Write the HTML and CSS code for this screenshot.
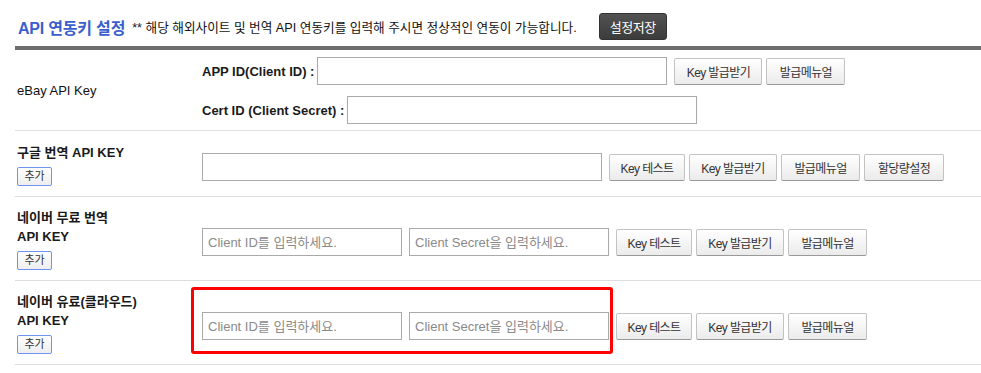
FILE: index.html
```html
<!DOCTYPE html>
<html lang="ko">
<head>
<meta charset="utf-8">
<title>API 연동키 설정</title>
<link rel="stylesheet" href="styles.css">
</head>
<body>
<div class="api-settings">
  <div class="head">
    <h2 class="head-title">API 연동키 설정</h2>
    <p class="head-note">** 해당 해외사이트 및 번역 API 연동키를 입력해 주시면 정상적인 연동이 가능합니다.</p>
    <button class="btn-save" type="button">설정저장</button>
  </div>

  <div class="key-table">
    <div class="key-row">
      <div class="key-label key-label--plain">eBay API Key</div>
      <div class="key-fields key-fields--stack">
        <div class="field-line">
          <span class="field-name">APP ID(Client ID) :</span>
          <input class="inp inp-350" type="text">
          <button class="btn btn-issue" type="button">Key 발급받기</button>
          <button class="btn btn-manual" type="button">발급메뉴얼</button>
        </div>
        <div class="field-line">
          <span class="field-name">Cert ID (Client Secret) :</span>
          <input class="inp inp-350" type="text">
        </div>
      </div>
    </div>

    <div class="key-row">
      <div class="key-label">
        구글 번역 API KEY
        <button class="btn-add" type="button">추가</button>
      </div>
      <div class="key-fields">
        <input class="inp inp-400" type="text">
        <button class="btn btn-test" type="button">Key 테스트</button>
        <button class="btn btn-issue" type="button">Key 발급받기</button>
        <button class="btn btn-manual" type="button">발급메뉴얼</button>
        <button class="btn btn-quota" type="button">할당량설정</button>
      </div>
    </div>

    <div class="key-row">
      <div class="key-label">
        네이버 무료 번역<br>API KEY
        <button class="btn-add" type="button">추가</button>
      </div>
      <div class="key-fields">
        <input class="inp inp-200" type="text" placeholder="Client ID를 입력하세요.">
        <input class="inp inp-200" type="text" placeholder="Client Secret을 입력하세요.">
        <button class="btn btn-test" type="button">Key 테스트</button>
        <button class="btn btn-issue" type="button">Key 발급받기</button>
        <button class="btn btn-manual" type="button">발급메뉴얼</button>
      </div>
    </div>

    <div class="key-row key-row--marked">
      <div class="key-label">
        네이버 유료(클라우드)<br>API KEY
        <button class="btn-add" type="button">추가</button>
      </div>
      <div class="key-fields">
        <input class="inp inp-200" type="text" placeholder="Client ID를 입력하세요.">
        <input class="inp inp-200" type="text" placeholder="Client Secret을 입력하세요.">
        <button class="btn btn-test" type="button">Key 테스트</button>
        <button class="btn btn-issue" type="button">Key 발급받기</button>
        <button class="btn btn-manual" type="button">발급메뉴얼</button>
      </div>
      <div class="mark-box"></div>
    </div>
  </div>
</div>
</body>
</html>
```

FILE: styles.css
```css
body {
  margin: 0;
  background: #fff;
  color: #222;
  font-family: "Liberation Sans", "Noto Sans CJK KR", sans-serif;
}

.api-settings {
  margin-left: 15px;
}

/* header */
.head {
  display: flex;
  align-items: center;
  height: 27px;
  padding: 13px 0 6px 3px;
}

.head-title {
  margin: 0;
  font-size: 16px;
  font-weight: bold;
  color: #3a5fcd;
  letter-spacing: -0.2px;
  white-space: nowrap;
}

.head-note {
  margin: 0 0 0 7px;
  font-size: 12.65px;
  color: #111;
  white-space: nowrap;
}

.btn-save {
  appearance: none;
  margin-left: 22px;
  box-sizing: border-box;
  width: 68px;
  height: 27px;
  padding: 0;
  border: 1px solid #333;
  border-radius: 3px;
  background: linear-gradient(#525252, #3c3c3c);
  color: #fff;
  font-family: "Liberation Sans", "Noto Sans CJK KR", sans-serif;
  font-size: 13px;
  letter-spacing: -0.5px;
}

/* table */
.key-table {
  border-top: 4px solid #6e6e6e;
}

.key-row {
  position: relative;
  display: grid;
  grid-template-columns: 187px 1fr;
  align-items: center;
  box-sizing: border-box;
  min-height: 66px;
  border-bottom: 1px solid #ddd;
}

.key-label {
  padding: 11px 0 10px 2px;
  font-size: 13px;
  font-weight: bold;
  line-height: 19px;
  color: #1a1a1a;
}

.key-label--plain {
  font-weight: normal;
  color: #111;
}

.btn-add {
  appearance: none;
  display: block;
  box-sizing: border-box;
  width: 35px;
  height: 19px;
  margin-top: 5px;
  padding: 0;
  border: 1px solid #6f93f0;
  border-radius: 2px;
  background: linear-gradient(#ffffff, #eeeeee);
  color: #333;
  font-family: "Liberation Sans", "Noto Sans CJK KR", sans-serif;
  font-size: 11px;
  font-weight: normal;
  line-height: 17px;
}

.key-fields {
  display: flex;
  align-items: center;
  margin-top: 7px;
}

.key-fields--stack {
  flex-direction: column;
  align-items: flex-start;
  gap: 11px;
  margin-top: 0;
  padding: 7px 0 6px;
}

.field-line {
  display: flex;
  align-items: center;
}

.field-name {
  margin-right: 3px;
  font-size: 13px;
  font-weight: bold;
  color: #1a1a1a;
  white-space: nowrap;
}

/* inputs */
.inp {
  box-sizing: border-box;
  height: 28px;
  margin: 0;
  padding: 0 5px;
  border: 1px solid #aaa;
  border-radius: 0;
  background: #fff;
  color: #333;
  font-family: "Liberation Sans", "Noto Sans CJK KR", sans-serif;
  font-size: 13px;
}

.inp::placeholder {
  color: #8a8a8a;
}

.inp-350 { width: 350px; }
.inp-400 { width: 400px; }
.inp-200 { width: 200px; }

.inp + .inp {
  margin-left: 7px;
}

/* buttons */
.btn {
  appearance: none;
  box-sizing: border-box;
  height: 27px;
  margin: 0 0 0 4px;
  padding: 0;
  border: 1px solid #c2c2c2;
  border-bottom-color: #999;
  border-radius: 2px;
  background: linear-gradient(#ffffff, #ebebeb);
  color: #333;
  font-family: "Liberation Sans", "Noto Sans CJK KR", sans-serif;
  font-size: 12px;
  letter-spacing: -0.6px;
  white-space: nowrap;
}

.inp + .btn {
  margin-left: 7px;
}

.btn-test { width: 76px; }
.btn-issue { width: 88px; }
.btn-manual { width: 79px; }
.btn-quota { width: 80px; }

/* annotation box over the last row */
.mark-box {
  position: absolute;
  left: 176px;
  top: 6px;
  box-sizing: border-box;
  width: 422px;
  height: 67px;
  border: 3px solid #ff0000;
  border-radius: 3px;
  pointer-events: none;
}
```
